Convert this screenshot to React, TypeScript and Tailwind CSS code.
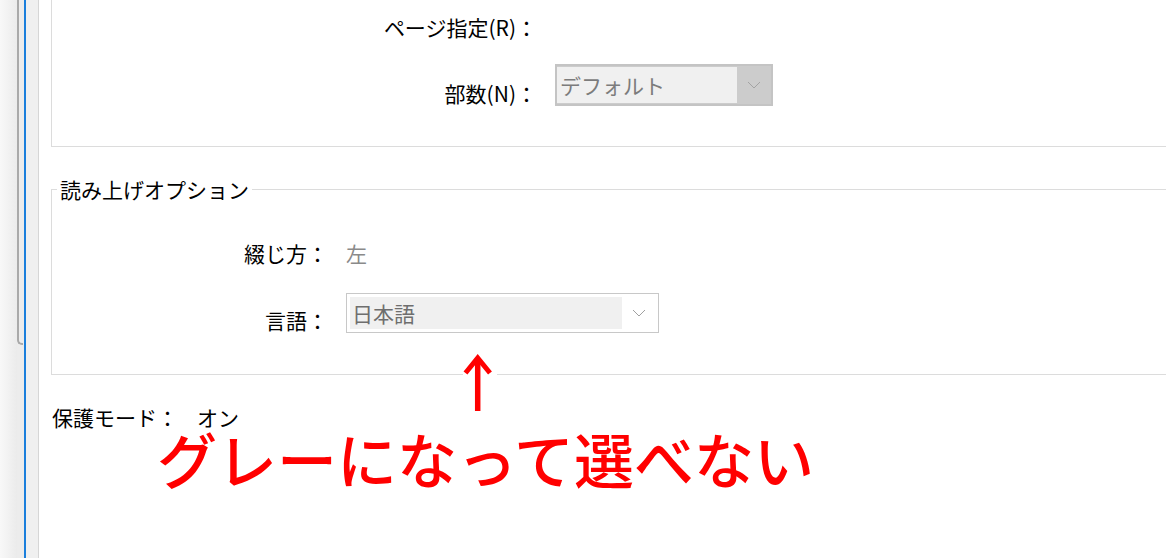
import React from 'react';

const jp = { fontFamily: '"Noto Sans CJK JP", "Noto Sans", sans-serif' };

const Chevron: React.FC<{ color: string }> = ({ color }) => (
    <svg width="14" height="8" viewBox="0 0 14 8" fill="none">
        <path d="M1 1 L7 7 L13 1" stroke={color} strokeWidth="1" />
    </svg>
);

const LeftRail: React.FC = () => (
    <div className="flex w-[39px] shrink-0 h-full">
        <div className="w-[17px] h-full bg-gradient-to-r from-[#f8f8f8] to-[#ebebeb]" />
        <div className="w-[7px] h-full bg-[#ececec]">
            <div className="h-[345px] w-[6px] border-l-2 border-b-2 border-[#a9a9a9] rounded-bl-[5px]" />
        </div>
        <div className="w-[2px] h-full bg-[#1b7fdc]" />
        <div className="w-[13px] h-full bg-[#f0f0f0] border-r border-[#d6d6d6]" />
    </div>
);

const App: React.FC = () => {
    return (
        <div className="relative w-[1166px] h-[558px] flex overflow-hidden bg-white text-black text-[21px]" style={jp}>
            <LeftRail />
            <div className="flex-1 pl-[12px] flex flex-col">
                {/* 印刷オプション（上部） */}
                <div className="h-[147px] border-l border-b border-[#dcdcdc]">
                    <div className="mt-[16px] flex">
                        <div className="w-[485px] text-right leading-[22px]">ページ指定(R)：</div>
                    </div>
                    <div className="mt-[26px] flex items-start">
                        <div className="w-[485px] mt-[18px] text-right leading-[22px]">部数(N)：</div>
                        <div className="ml-[18px] w-[218px] h-[42px] border-2 border-[#c4c4c4] bg-[#cccccc] flex py-[1px]">
                            <div className="w-[180px] bg-[#f0f0f0] pl-[3px] flex items-center text-[#7c7c7c] leading-none">デフォルト</div>
                            <div className="flex-1 flex items-center justify-center">
                                <Chevron color="#a3a3a3" />
                            </div>
                        </div>
                    </div>
                </div>

                {/* 読み上げオプション */}
                <div className="mt-[42px] h-[186px] border-t border-l border-b border-[#dcdcdc]">
                    <div className="-mt-[12px] ml-[5px] w-fit bg-white px-[3px] leading-[22px]">読み上げオプション</div>
                    <div className="mt-[42px] flex leading-[22px]">
                        <div className="w-[276px] text-right">綴じ方：</div>
                        <div className="ml-[18px] text-[#8a8a8a]">左</div>
                    </div>
                    <div className="mt-[29px] flex items-start">
                        <div className="w-[276px] mt-[16px] text-right leading-[22px]">言語：</div>
                        <div className="ml-[18px] w-[313px] h-[40px] border border-[#c8c8c8] bg-white flex p-[3px]">
                            <div className="w-[272px] bg-[#f0f0f0] pl-[2px] flex items-center text-[#6e6e6e] leading-none">日本語</div>
                            <div className="flex-1 flex items-center justify-center">
                                <Chevron color="#a0a0a0" />
                            </div>
                        </div>
                    </div>
                </div>

                <div className="mt-[31px] pl-[1px] flex leading-[22px]">
                    <span>保護モード：</span>
                    <span className="ml-[19px]">オン</span>
                </div>

                <div className="mt-0 ml-[106px] text-[60px] leading-none font-medium text-[#ff0000] whitespace-nowrap">
                    グレーになって選べない
                </div>
            </div>

            {/* 注釈の矢印 */}
            <svg className="absolute left-[463px] top-[352px] bg-white" width="34" height="62" viewBox="0 0 34 62">
                <path d="M14.7 6 L14.7 59" stroke="#ff0000" strokeWidth="5.5" fill="none" />
                <path d="M2.5 21 L14.7 6 L27 21" stroke="#ff0000" strokeWidth="5" fill="none" strokeLinejoin="miter" />
            </svg>
        </div>
    );
};

export default App;
